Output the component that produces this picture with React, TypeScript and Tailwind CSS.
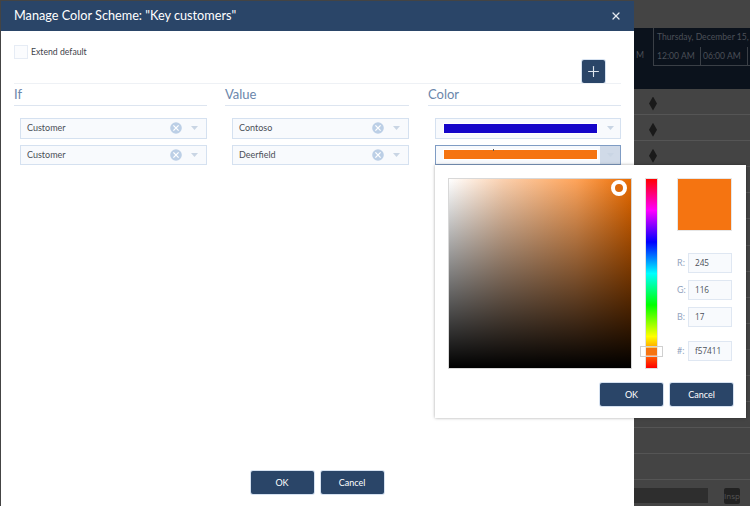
import { X, Plus } from "lucide-react";

const FONT = "font-['Lato','Open_Sans',sans-serif]";

function Caret({ className = "text-[#c9d5e4]" }: { className?: string }) {
  return (
    <svg width="7" height="4" viewBox="0 0 7 4" className={className}>
      <path d="M0 0h7L3.5 4z" fill="currentColor" />
    </svg>
  );
}

function ClearIcon() {
  return (
    <svg width="12" height="12" viewBox="0 0 12 12">
      <circle cx="6" cy="6" r="5.8" fill="#bccfe6" />
      <path d="M3.4 3.4l5.2 5.2M8.6 3.4L3.4 8.6" stroke="#fff" strokeWidth="1.3" />
    </svg>
  );
}

function ComboBox({ value, width }: { value: string; width: string }) {
  return (
    <div className={`flex items-center h-[20.5px] border border-[#d5e1f0] bg-[#f8fafd] pl-[6px] text-[9px] text-[#4a4f57] ${width}`}>
      <span className="flex-1 mt-[-1px]">{value}</span>
      <ClearIcon />
      <span className="w-[24px] flex justify-center">
        <Caret />
      </span>
    </div>
  );
}

function ColorBox({ color, active }: { color: string; active?: boolean }) {
  return (
    <div className={`relative flex items-stretch h-[20.5px] w-[186px] border ${active ? "border-[#7f9cc4]" : "border-[#d5e1f0]"} bg-[#f8fafd]`}>
      <div className="flex-1 flex items-center pl-[7px] pr-[2px]">
        <div className={`h-[11px] w-[155px] border border-white ${color}`} />
      </div>
      <div className={`w-[22px] flex items-center justify-center ${active ? "bg-[#d0dae8]" : ""}`}>
        <Caret />
      </div>
      {active && <div className="absolute left-[57px] top-[3px] w-px h-[2px] bg-[#555]" />}
    </div>
  );
}

function DialogButton({ label }: { label: string }) {
  return (
    <button className="w-[63px] h-[23px] rounded-[2px] bg-[#2a4568] text-[9px] text-white shadow-[0_0_0_1px_#d5e1f0]">
      {label}
    </button>
  );
}

function RgbField({ label, value, className = "" }: { label: string; value: string; className?: string }) {
  return (
    <div className={`flex items-center justify-between ${className}`}>
      <span className="text-[9px] text-[#93a5bf]">{label}</span>
      <div className="w-[44px] h-[20px] flex items-center pl-[6px] border border-[#dfe7f2] bg-[#f8fafd] text-[8.2px] text-[#4a4f57] font-['Open_Sans',sans-serif]">
        {value}
      </div>
    </div>
  );
}

function ColorPopup() {
  return (
    <div className="absolute left-[435px] top-[165px] w-[311px] h-[253px] bg-white shadow-[0_0_3px_rgba(0,0,0,0.35)] pt-[13px] pl-[13px] pr-[13px]">
      <div className="flex">
        <div className="relative w-[184px] h-[191px] border border-[#d8d8d8] bg-[linear-gradient(to_top,#000,transparent),linear-gradient(to_right,#fff,#fbd0ae_30%,#ffa45a_70%,#e96b00)]">
          <div className="absolute left-[162px] top-[1px] w-[16px] h-[16px] rounded-full border-[4px] border-white bg-[#dd6a0c]" />
        </div>
        <div className="relative ml-[13px] w-[13px] h-[191px] border border-[#e0e0e0] bg-[linear-gradient(to_bottom,#f00,#f0f,#00f,#0ff,#0f0,#ff0,#f00)]">
          <div className="absolute left-[-6px] top-[167px] w-[23px] h-[11px] border border-[#d0d0d0] bg-white/40 flex items-center justify-center">
            <div className="w-[11px] h-[7px] bg-[#f57411]" />
          </div>
        </div>
        <div className="ml-[19px] w-[55px] flex flex-col">
          <div className="h-[53px] bg-[#f57411] border border-[#e6e6e6]" />
          <RgbField label="R:" value="245" className="mt-[22px]" />
          <RgbField label="G:" value="116" className="mt-[7px]" />
          <RgbField label="B:" value="17" className="mt-[7px]" />
          <RgbField label="#:" value="f57411" className="mt-[14px]" />
        </div>
      </div>
      <div className="flex justify-end gap-[7px] mt-[14px]">
        <DialogButton label="OK" />
        <DialogButton label="Cancel" />
      </div>
    </div>
  );
}

function Dialog() {
  return (
    <div className={`absolute left-[1px] top-[1px] bottom-0 w-[633px] flex flex-col bg-white ${FONT}`}>
      <div className="h-[30px] shrink-0 flex items-center justify-between bg-[#2a4568] pl-[13px] pr-[12px] text-white">
        <span className="text-[12.7px]">Manage Color Scheme: "Key customers"</span>
        <X size={12} strokeWidth={2.5} className="text-[#e4e9f0]" />
      </div>

      <div className="flex-1 flex flex-col px-[13px]">
        <div className="flex items-center mt-[14px] h-[14px]">
          <div className="w-[14px] h-[14px] border border-[#e6ecf5] bg-[#fbfcfe]" />
          <span className="ml-[3px] text-[8.7px] text-[#3f444c]">Extend default</span>
        </div>

        <div className="flex justify-end pr-[16px] h-[24px] shrink-0 mt-[1px]">
          <div className="w-[23px] h-[23px] rounded-[2px] bg-[#2a4568] flex items-center justify-center shadow-[0_0_0_1px_#d5e1f0]">
            <Plus size={17} strokeWidth={1.6} className="text-[#dfe6ef]" />
          </div>
        </div>

        <div className="border-t border-[#eef1f5] mt-[-1px] grid grid-cols-[211px_203px_193px] w-[607px]">
          {[
            ["If", "w-[187px]", "Customer", "Customer", "w-[193px]"],
            ["Value", "w-[177px]", "Contoso", "Deerfield", "w-[184px]"],
          ].map(([head, width, a, b, col]) => (
            <div key={head} className={col}>
              <div className="h-[22px] flex items-center border-b border-[#dde5f0] text-[13px] text-[#6b86ab]">{head}</div>
              <div className="pt-[12px] flex flex-col gap-[6px] items-end">
                <ComboBox value={a} width={width} />
                <ComboBox value={b} width={width} />
              </div>
            </div>
          ))}
          <div>
            <div className="h-[22px] flex items-center border-b border-[#dde5f0] text-[13px] text-[#6b86ab]">Color</div>
            <div className="pt-[12px] flex flex-col gap-[6px] items-end">
              <ColorBox color="bg-[#1505c9]" />
              <ColorBox color="bg-[#f57411]" active />
            </div>
          </div>
        </div>

        <div className="mt-auto mb-[12px] flex justify-center gap-[7px] pr-[1px]">
          <DialogButton label="OK" />
          <DialogButton label="Cancel" />
        </div>
      </div>
    </div>
  );
}

function Backdrop() {
  return (
    <div className="w-full h-full flex flex-col pl-[634px] font-['Lato',sans-serif]">
      <div className="h-[28px] shrink-0" />
      <div className="h-[61px] shrink-0 flex flex-col bg-[#0b121c] text-[8.6px] text-[#4b5058]">
        <div className="h-[38px] flex">
          <div className="w-[20px] flex items-end justify-start pl-[2px] pb-[4px] border-r border-[#3a3f46]">M</div>
          <div className="flex-1 min-w-0 flex flex-col border-b border-[#3a3f46]">
            <div className="h-[19px] pl-[3px] flex items-center whitespace-nowrap overflow-hidden">Thursday, December 15, 2</div>
            <div className="flex-1 flex">
              <div className="w-[47px] pl-[3px] flex items-center border-r border-[#3a3f46]">12:00 AM</div>
              <div className="w-[47px] pl-[2px] flex items-center border-r border-[#3a3f46]">06:00 AM</div>
            </div>
          </div>
        </div>
      </div>
      {[0, 1, 2, 3, 4, 5, 6, 7, 8, 9, 10, 11, 12, 13, 14].map((i) => (
        <div key={i} className="h-[26.1px] shrink-0 flex items-center pl-[15px] pt-[4px] border-b border-[#555]">
          {i < 3 && <div className="w-[8px] h-[14px] bg-[#1a1a1a] [clip-path:polygon(50%_0,100%_50%,50%_100%,0_50%)]" />}
        </div>
      ))}
    </div>
  );
}

export default function App() {
  return (
    <div className="relative w-[750px] h-[506px] overflow-hidden bg-[#444444]">
      <Backdrop />
      <div className="absolute left-[634px] top-[488px] w-[74px] h-[15px] bg-[#2e2e2e]" />
      <div className="absolute left-[724px] top-[488px] w-[16px] h-[16px] rounded-[2px] bg-[#222] pt-[2px] text-[8px] text-[#555] overflow-hidden font-['Open_Sans',sans-serif]">
        Insp
      </div>
      <Dialog />
      <div className={FONT}>
        <ColorPopup />
      </div>
    </div>
  );
}
